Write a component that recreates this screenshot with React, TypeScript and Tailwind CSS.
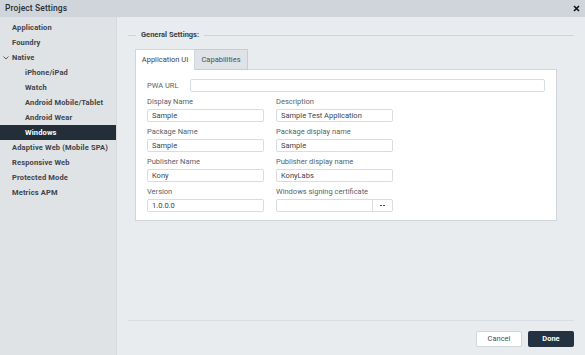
import React from 'react';

const font = { fontFamily: 'Roboto, "Noto Sans", sans-serif' };

const navItems: { label: string; child?: boolean; selected?: boolean; chevron?: boolean }[] = [
  { label: 'Application' },
  { label: 'Foundry' },
  { label: 'Native', chevron: true },
  { label: 'iPhone/iPad', child: true },
  { label: 'Watch', child: true },
  { label: 'Android Mobile/Tablet', child: true },
  { label: 'Android Wear', child: true },
  { label: 'Windows', child: true, selected: true },
  { label: 'Adaptive Web (Mobile SPA)' },
  { label: 'Responsive Web' },
  { label: 'Protected Mode' },
  { label: 'Metrics APM' },
];

const Field: React.FC<{ label: string; value?: string; cert?: boolean }> = ({ label, value, cert }) => (
  <div className="flex flex-col">
    <div className="h-[10px] leading-[10px] text-[7.5px] text-[#5a5f66] mb-[2px] whitespace-nowrap">{label}</div>
    {cert ? (
      <div className="h-[13px] w-[117px] flex border border-[#d9dde1] rounded-[2px] bg-white">
        <div className="flex-1" />
        <div className="w-[20px] border-l border-[#d9dde1] flex items-center justify-center gap-[1.5px]">
          <span className="w-[1.5px] h-[1.5px] rounded-full bg-[#333]" />
          <span className="w-[1.5px] h-[1.5px] rounded-full bg-[#333]" />
        </div>
      </div>
    ) : (
      <div className="h-[13px] w-[117px] border border-[#d9dde1] rounded-[2px] bg-white px-[4px] flex items-center text-[7.5px] text-[#3d4248] whitespace-nowrap">
        {value}
      </div>
    )}
  </div>
);

const App: React.FC = () => {
  return (
    <div className="w-[585px] h-[355px] flex flex-col overflow-hidden bg-[#e9ecef]" style={font}>
      {/* title bar */}
      <div className="h-[17px] bg-[#d0d5db] flex items-center justify-between pl-[5px] pr-[5px]">
        <span className="text-[8.5px] font-medium text-[#2b2f33] tracking-[0.1px]">Project Settings</span>
        <svg width="7" height="7" viewBox="0 0 7 7">
          <path d="M1 1L6 6M6 1L1 6" stroke="#111" strokeWidth="1.6" />
        </svg>
      </div>

      <div className="flex flex-1 min-h-0">
        {/* sidebar */}
        <div className="w-[117px] bg-[#e0e3e6] border-r border-[#d6dadd] pt-[3px]">
          {navItems.map((item) => (
            <div
              key={item.label}
              className={
                'h-[15px] flex items-center text-[7.5px] font-bold tracking-[0.15px] whitespace-nowrap ' +
                (item.selected ? 'bg-[#232e39] text-white ' : 'text-[#3e4349] ') +
                (item.child ? 'pl-[25px]' : 'pl-[12px]')
              }
            >
              {item.chevron && (
                <svg width="6" height="4" viewBox="0 0 6 4" className="-ml-[9px] mr-[3px]">
                  <path d="M0.5 0.5L3 3L5.5 0.5" stroke="#4a4f55" strokeWidth="0.9" fill="none" />
                </svg>
              )}
              {item.label}
            </div>
          ))}
        </div>

        {/* main */}
        <div className="flex-1 flex flex-col px-[11px]">
          {/* legend */}
          <div className="mt-[13px] h-[10px] flex items-center">
            <div className="w-[8px] h-px bg-[#cfd3d7]" />
            <span className="px-[5px] text-[7.5px] font-bold text-[#3a3f45] whitespace-nowrap">General Settings:</span>
            <div className="flex-1 h-px bg-[#cfd3d7]" />
          </div>

          {/* tabs */}
          <div className="ml-[7px] mt-[9px] w-[422px]">
            <div className="flex h-[21px] relative z-10">
              <div className="w-[60px] bg-white border border-b-0 border-[#d2d6da] flex items-center justify-center text-[7.5px] text-[#3d4248]">
                Application UI
              </div>
              <div className="w-[53px] bg-[#dfe3e7] border border-l-0 border-[#c9cdd2] flex items-center justify-center text-[7.5px] text-[#4a4f55]">
                Capabilities
              </div>
            </div>
            <div className="bg-white border border-[#d2d6da] -mt-px px-[11px] pt-[9px] pb-[8px]">
              <div className="flex items-center">
                <div className="w-[43px] text-[7.5px] text-[#5a5f66]">PWA URL</div>
                <div className="flex-1 h-[13px] border border-[#d9dde1] rounded-[2px]" />
              </div>
              <div className="grid grid-cols-[117px_117px] gap-x-[12px] gap-y-[5px] mt-[5px]">
                <Field label="Display Name" value="Sample" />
                <Field label="Description" value="Sample Test Application" />
                <Field label="Package Name" value="Sample" />
                <Field label="Package display name" value="Sample" />
                <Field label="Publisher Name" value="Kony" />
                <Field label="Publisher display name" value="KonyLabs" />
                <Field label="Version" value="1.0.0.0" />
                <Field label="Windows signing certificate" cert />
              </div>
            </div>
          </div>

          <div className="flex-1" />

          {/* footer */}
          <div className="h-px bg-[#dadee2]" />
          <div className="flex justify-end gap-[6px] pt-[10px] pb-[8px]">
            <button className="w-[46px] h-[16px] bg-white border border-[#d2d6da] rounded-[2px] text-[7.5px] text-[#4a4f55]">
              Cancel
            </button>
            <button className="w-[46px] h-[16px] bg-[#243140] rounded-[2px] text-[7.5px] font-bold text-white">
              Done
            </button>
          </div>
        </div>
      </div>
    </div>
  );
};

export default App;
